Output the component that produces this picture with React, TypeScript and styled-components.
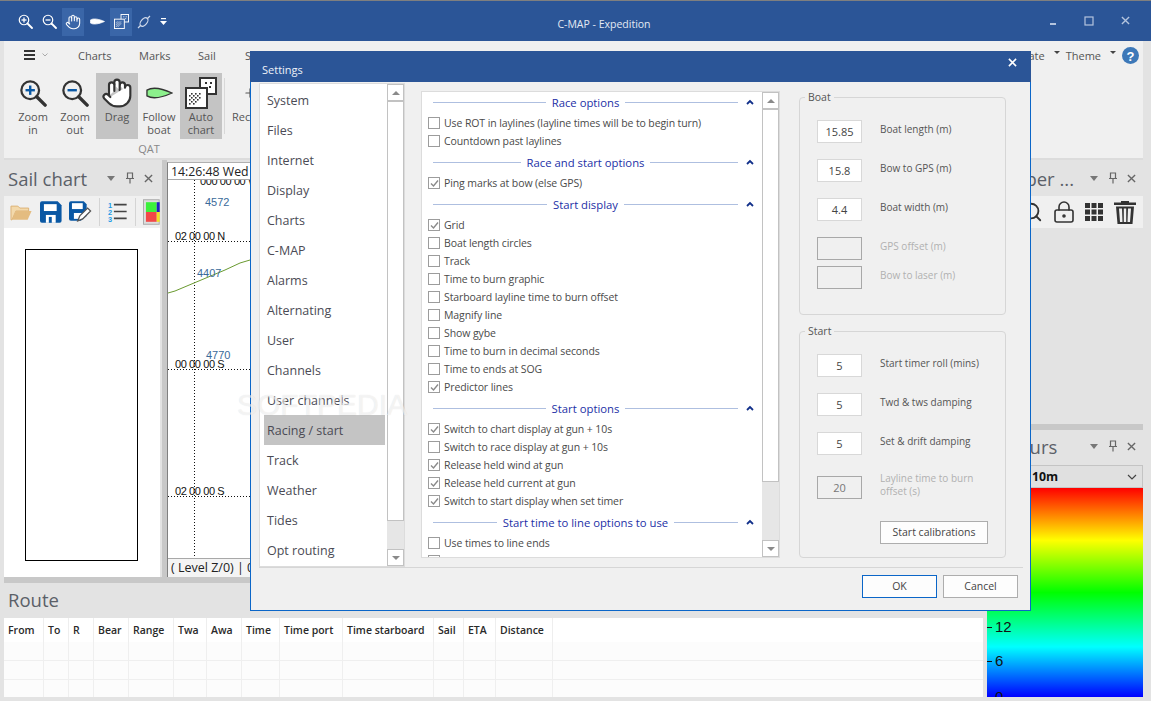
import React from "react";
import styled, { createGlobalStyle } from "styled-components";
import { Hand, Search, LockKeyhole, Plus } from "lucide-react";

const UI = `"Open Sans", "Noto Sans", "Liberation Sans", sans-serif`;

const Global = createGlobalStyle`
  html, body { margin: 0; padding: 0; overflow: hidden; background: #e3e3e3; }
  * { box-sizing: border-box; }
  body { font-family: ${UI}; font-size: 11px; color: #444; }
`;

const Shell = styled.div`
  position: relative;
  width: 1151px;
  height: 701px;
  overflow: hidden;
  display: flex;
  flex-direction: column;
  background: #e3e3e3;
`;

/* ---- title bar ---- */
const TitleBar = styled.header`
  height: 41px;
  flex: none;
  background: #2b5597;
  border-top: 1px solid #7f7f7f;
  display: flex;
  align-items: center;
  padding: 0 8px 0 13px;
  position: relative;
`;
const Qat = styled.div`
  display: flex;
  align-items: center;
  width: 171px;
  margin-top: 1px;
`;
const QatBtn = styled.div<{ $on?: boolean; $w?: number }>`
  width: ${(p) => p.$w ?? 24}px;
  height: 28px;
  display: flex;
  align-items: center;
  justify-content: center;
  background: ${(p) => (p.$on ? "#3a66a8" : "transparent")};
`;
const AppTitle = styled.div`
  flex: 1;
  text-align: center;
  color: #e4eaf4;
  font-size: 10.5px;
  margin-left: -11px;
  padding-top: 6px;
`;
const WinBtns = styled.div`
  display: flex;
  width: 108px;
`;
const WinBtn = styled.div`
  width: 36px;
  height: 40px;
  display: flex;
  align-items: center;
  justify-content: center;
  margin-top: -1px;
`;

/* ---- ribbon ---- */
const Ribbon = styled.section`
  height: 119px;
  flex: none;
  margin: 0 8px 0 4px;
  background: #f0f0f0;
  border-bottom: 2px solid #dcdcdc;
  display: flex;
  flex-direction: column;
`;
const TabRow = styled.nav`
  height: 32px;
  flex: none;
  display: flex;
  align-items: center;
  padding: 0 4px 4px 20px;
`;
const Burger = styled.div`
  display: flex;
  align-items: center;
  gap: 7px;
  width: 54px;
`;
const TabLabel = styled.span<{ $w?: number }>`
  ${(p) => (p.$w ? `width: ${p.$w}px;` : "")}
  font-size: 11px;
  color: #555;
`;
const Spacer = styled.div`
  flex: 1;
`;
const TabCaret = styled.span`
  width: 0;
  height: 0;
  border-left: 3px solid transparent;
  border-right: 3px solid transparent;
  border-top: 3px solid #444;
  margin: 0 6px 6px 9px;
`;
const RibbonBody = styled.div`
  display: flex;
  align-items: flex-start;
  height: 67px;
  padding-left: 8px;
`;
const RibbonBtn = styled.div<{ $on?: boolean }>`
  width: 42px;
  height: 66px;
  display: flex;
  flex-direction: column;
  align-items: center;
  padding-top: 3px;
  background: ${(p) => (p.$on ? "#c4c4c4" : "transparent")};
`;
const RibbonIcon = styled.div`
  height: 34px;
  display: flex;
  align-items: center;
  justify-content: center;
`;
const RibbonText = styled.div`
  font-size: 11px;
  line-height: 13px;
  color: #555;
  text-align: center;
`;
const RibbonDivider = styled.div`
  width: 1px;
  height: 56px;
  margin: 5px 4px 0 2px;
  background: #d8d8d8;
`;
const RibbonCaption = styled.div`
  width: 290px;
  text-align: center;
  font-size: 11px;
  color: #888;
  padding-top: 1px;
`;

/* ---- workspace ---- */
const Workspace = styled.main`
  flex: 1;
  min-height: 0;
  display: flex;
  padding: 0 8px 4px 4px;
`;
const LeftColumn = styled.div`
  width: 979px;
  flex: none;
  display: flex;
  flex-direction: column;
`;
const UpperRow = styled.div`
  height: 417px;
  flex: none;
  display: flex;
`;
const HSplit = styled.div`
  height: 6px;
  flex: none;
  background: #c8c8c8;
`;
const SailPanel = styled.section`
  width: 156px;
  flex: none;
  display: flex;
  flex-direction: column;
`;
const VSplit = styled.div`
  width: 7px;
  flex: none;
  background: #c8c8c8;
  border-left: 2px solid #e3e3e3;
`;
const PanelHead = styled.div<{ $h?: number; $pb?: number }>`
  height: ${(p) => p.$h ?? 36}px;
  flex: none;
  display: flex;
  align-items: center;
  padding: 0 2px ${(p) => p.$pb ?? 0}px 4px;
  font-size: 18.5px;
  color: #5b6068;
  background: #e3e3e3;
`;
const PanelTitle = styled.span<{ $shift?: number }>`
  flex: 1;
  white-space: nowrap;
  overflow: hidden;
  margin-left: ${(p) => p.$shift ?? 0}px;
`;
const PanelCaret = styled.span`
  width: 0;
  height: 0;
  border-left: 4px solid transparent;
  border-right: 4px solid transparent;
  border-top: 5px solid #777;
  margin-right: 5px;
`;
const PanelBtn = styled.span`
  width: 19px;
  height: 16px;
  display: flex;
  align-items: center;
  justify-content: center;
`;
const IconBar = styled.div`
  height: 32px;
  flex: none;
  background: #f0f0f0;
  display: flex;
  align-items: center;
  padding-left: 6px;
  gap: 7.5px;
  overflow: hidden;
`;
const ToolBarRight = styled(IconBar)`
  justify-content: flex-end;
  padding: 0 5px 0 0;
  gap: 9px;
`;
const BarDivider = styled.span`
  width: 1px;
  height: 28px;
  background: #d4d4d4;
  flex: none;
`;
const SailBody = styled.div`
  flex: 1;
  background: #fff;
  padding: 21px 22px 16px 21px;
`;
const SailRect = styled.div`
  height: 100%;
  border: 1px solid #000;
`;
const ChartPanel = styled.section`
  flex: 1;
  min-width: 0;
  margin-top: 2px;
  border-left: 1px solid #808080;
  border-top: 1px solid #b0b0b0;
  background: #fff;
  display: flex;
  flex-direction: column;
`;
const ChartTime = styled.div`
  height: 17px;
  flex: none;
  border-bottom: 1px solid #a8a8a8;
  font: 12.3px/17px ${UI};
  color: #222;
  padding-left: 3px;
`;
const ChartCanvas = styled.svg`
  flex: 1;
  min-height: 0;
  display: block;
  width: 100%;
`;
const ChartStatus = styled.div`
  height: 19px;
  flex: none;
  border-top: 1px solid #a8a8a8;
  font: 12.5px/17px ${UI};
  color: #222;
  padding-left: 3px;
  background: #f4f4f4;
`;

/* ---- route ---- */
const RoutePanel = styled.section`
  flex: 1;
  min-height: 0;
  display: flex;
  flex-direction: column;
`;
const RouteHead = styled.div`
  height: 35px;
  flex: none;
  font-size: 18.5px;
  line-height: 34px;
  color: #5b6068;
  padding-left: 4px;
`;
const RouteGrid = styled.div`
  flex: 1;
  min-height: 0;
  overflow: hidden;
  background: #fff;
`;
const COLS = "40px 25px 25px 35px 45px 33px 35px 38px 63px 91px 30px 32px 57px 1fr";
const RouteHeader = styled.div`
  display: grid;
  grid-template-columns: ${COLS};
  height: 24px;
`;
const RouteTh = styled.div`
  font-size: 10.5px;
  font-weight: 600;
  line-height: 24px;
  color: #2a2a2a;
  padding-left: 4px;
  border-right: 1px solid #eee;
  white-space: nowrap;
  &:last-child { border-right: 0; }
`;
const RouteRow = styled.div`
  display: grid;
  grid-template-columns: ${COLS};
  height: 19px;
  background: #fcfcfc;
  border-bottom: 1px solid #efefef;
`;
const RouteTd = styled.div`
  border-right: 1px solid #efefef;
  &:last-child { border-right: 0; }
`;

/* ---- right column ---- */
const RightColumn = styled.aside`
  flex: 1;
  min-width: 0;
  margin-left: 4px;
  display: flex;
  flex-direction: column;
`;
const NumberPanel = styled.section`
  height: 270px;
  flex: none;
  display: flex;
  flex-direction: column;
`;
const ColoursPanel = styled.section`
  flex: 1;
  min-height: 0;
  display: flex;
  flex-direction: column;
`;
const ColourSelect = styled.div`
  height: 23px;
  flex: none;
  background: #e0e0e0;
  border: 1px solid #c4c4c4;
  display: flex;
  align-items: center;
  justify-content: space-between;
  padding: 0 5px 0 17px;
  font-size: 12.3px;
  font-weight: 700;
  color: #111;
`;
const Scale = styled.div`
  flex: 1;
  position: relative;
  overflow: hidden;
  background: linear-gradient(
    to bottom,
    #ff0000 0%,
    #ffff00 25%,
    #00ff00 50%,
    #00ffff 76%,
    #0000ff 100%
  );
`;
const ScaleMark = styled.div<{ $top: number }>`
  position: absolute;
  left: 0;
  top: ${(p) => p.$top}px;
  display: flex;
  align-items: center;
  gap: 3px;
  font: 15px/16px "Liberation Sans", sans-serif;
  color: #111;
  &::before {
    content: "";
    width: 5px;
    height: 1px;
    background: #111;
  }
`;

/* ---- dialog ---- */
const Dialog = styled.div`
  position: absolute;
  left: 250px;
  top: 51px;
  width: 781px;
  height: 560px;
  background: #f0f0f0;
  border: 1px solid #0b66c8;
  border-top: 0;
  display: flex;
  flex-direction: column;
`;
const DialogHead = styled.div`
  height: 31px;
  flex: none;
  margin: 0 -1px;
  background: #2b5597;
  color: #eef2f8;
  display: flex;
  align-items: center;
  justify-content: space-between;
  font-size: 11px;
  padding: 6px 14px 0 12px;
`;
const DialogClose = styled.span`
  display: flex;
  margin-top: -15px;
`;
const DialogBody = styled.div`
  height: 485px;
  flex: none;
  display: flex;
  align-items: flex-start;
  padding: 1px 0 0 8px;
`;
const ListFrame = styled.div`
  width: 146px;
  height: 485px;
  flex: none;
  display: flex;
  background: #fff;
  border: 1px solid #dcdcdc;
  border-bottom-width: 2px;
`;
const ListItems = styled.ul`
  flex: 1;
  list-style: none;
  margin: 0;
  padding: 1px 0 0 4px;
  overflow: hidden;
`;
const ListItem = styled.li<{ $on?: boolean }>`
  height: 30px;
  width: 121px;
  line-height: 31px;
  padding-left: 3px;
  font-size: 12.5px;
  color: #4b4b55;
  background: ${(p) => (p.$on ? "#c4c4c4" : "transparent")};
`;
const ScrollBar = styled.div`
  width: 17px;
  flex: none;
  display: flex;
  flex-direction: column;
  background: #e6e6e6;
`;
const ScrollArrow = styled.div<{ $down?: boolean }>`
  height: 17px;
  flex: none;
  margin-top: ${(p) => (p.$down ? "auto" : "0")};
  background: #fff;
  border: 1px solid #c2c2c2;
  display: flex;
  align-items: center;
  justify-content: center;
  &::after {
    content: "";
    border-left: 4px solid transparent;
    border-right: 4px solid transparent;
    ${(p) => (p.$down ? "border-top: 4px solid #8a8a8a;" : "border-bottom: 4px solid #8a8a8a;")}
  }
`;
const ScrollThumb = styled.div<{ $h: number }>`
  height: ${(p) => p.$h}px;
  flex: none;
  background: #fff;
  border: 1px solid #c2c2c2;
`;
const OptionsFrame = styled.div`
  width: 359px;
  height: 467px;
  flex: none;
  margin: 8px 0 0 16px;
  display: flex;
  background: #fff;
  border: 1px solid #dcdcdc;
`;
const OptionsList = styled.div`
  flex: 1;
  min-width: 0;
  overflow: hidden;
  padding: 0 0 0 6px;
`;
const SectionHead = styled.div<{ $first?: boolean }>`
  height: 20px;
  margin: ${(p) => (p.$first ? "0" : "2px")} 0 2px;
  display: flex;
  align-items: center;
  padding-left: 5px;
  color: #1c2fa6;
  font-size: 11.3px;
  white-space: nowrap;
`;
const SectionRule = styled.span`
  flex: 1;
  height: 1px;
  background: #aebfe0;
`;
const SectionText = styled.span`
  padding: 0 6px;
`;
const SectionChevron = styled.span`
  width: 24px;
  flex: none;
  display: flex;
  justify-content: center;
`;
const CheckRow = styled.div`
  height: 18px;
  display: flex;
  align-items: center;
  gap: 4px;
  font-size: 10.5px;
  letter-spacing: -0.1px;
  color: #4a4a4a;
  white-space: nowrap;
`;
const CheckBox = styled.span`
  width: 12px;
  height: 12px;
  flex: none;
  background: #fff;
  border: 1px solid #9c9c9c;
  display: flex;
  align-items: center;
  justify-content: center;
`;
const GroupColumn = styled.div`
  width: 207px;
  flex: none;
  margin: 6px 0 0 19px;
  display: flex;
  flex-direction: column;
  gap: 8px;
`;
const Group = styled.fieldset<{ $h: number }>`
  height: ${(p) => p.$h}px;
  margin: 0;
  min-width: 0;
  padding: 0;
  border: 1px solid #d6d6d6;
  border-radius: 4px;
`;
const GroupLegend = styled.legend`
  margin-left: 5px;
  padding: 0 3px;
  font-size: 10.5px;
  line-height: 16px;
  color: #555;
`;
const GroupBody = styled.div`
  padding: 15px 0 0 17px;
`;
const FieldRow = styled.div<{ $gap: number }>`
  display: flex;
  align-items: center;
  gap: 18px;
  margin-bottom: ${(p) => p.$gap}px;
`;
const NumInput = styled.div<{ $off?: boolean }>`
  width: 45px;
  height: 23px;
  flex: none;
  border: 1px solid ${(p) => (p.$off ? "#a8a8a8" : "#d8d8d8")};
  background: ${(p) => (p.$off ? "#f0f0f0" : "#fff")};
  color: ${(p) => (p.$off ? "#777" : "#444")};
  font-size: 11px;
  line-height: 21px;
  text-align: center;
`;
const FieldLabel = styled.div<{ $off?: boolean }>`
  font-size: 10px;
  line-height: 13px;
  margin-bottom: 4px;
  color: ${(p) => (p.$off ? "#b0b0b0" : "#555")};
`;
const PushBtn = styled.div<{ $w: number; $primary?: boolean }>`
  width: ${(p) => p.$w}px;
  height: 23px;
  background: #fdfdfd;
  border: 1px solid ${(p) => (p.$primary ? "#0b66c8" : "#adadad")};
  font-size: 10.5px;
  line-height: 21px;
  text-align: center;
  color: #444;
`;
const CalibRow = styled.div`
  padding-left: 63px;
`;
const DialogFoot = styled.div`
  flex: 1;
  margin: 0 7px 0 8px;
  border-top: 1px solid #d6d6d6;
  display: flex;
  justify-content: flex-end;
  gap: 6px;
  padding: 7px 5px 0 0;
`;
const Watermark = styled.div`
  position: absolute;
  left: 237px;
  top: 388px;
  font: 400 30px/34px "Liberation Sans", sans-serif;
  color: rgba(255, 255, 255, 0.6);
  text-shadow: 0 0 1px rgba(0, 0, 0, 0.12);
  pointer-events: none;
`;

/* ---- drawings ---- */
const Mag = ({ size, color, sign, signColor }: { size: number; color: string; sign: "+" | "-"; signColor: string }) => (
  <svg width={size} height={size} viewBox="0 0 30 30" fill="none">
    <circle cx="12" cy="12" r="9.5" stroke={color} strokeWidth="2.4" />
    <path d="M19 19 L28 28" stroke={color} strokeWidth="3.6" strokeLinecap="round" />
    <path d="M7 12 H17" stroke={signColor} strokeWidth="2.6" />
    {sign === "+" && <path d="M12 7 V17" stroke={signColor} strokeWidth="2.6" />}
  </svg>
);
const BoatShape = ({ w, h, fill, stroke }: { w: number; h: number; fill: string; stroke: string }) => (
  <svg width={w} height={h} viewBox="0 0 28 12">
    <path d="M1 3 C6 0 16 1 27 6 C16 11 6 12 1 9 Z" fill={fill} stroke={stroke} strokeWidth="1.4" />
  </svg>
);
const CHECKS: [number, number][] = [
  [4, 26], [6, 24], [8, 22], [10, 20], [12, 18], [14, 16],
  [4, 22], [6, 20], [8, 18], [10, 16], [4, 18], [6, 16],
  [8, 26], [10, 24], [12, 22], [14, 20],
];
const AutoChartIcon = ({ size, color, bg }: { size: number; color: string; bg: string }) => (
  <svg width={size} height={size} viewBox="0 0 32 32">
    <rect x="15" y="1" width="16" height="16" fill={bg} stroke={color} strokeWidth="2" />
    <rect x="1" y="11" width="21" height="20" fill={bg} stroke={color} strokeWidth="2" />
    <g fill={color}>
      {CHECKS.map(([x, y]) => <rect key={`${x}-${y}`} x={x} y={y} width="1.6" height="1.6" />)}
      <rect x="20" y="5" width="2" height="2" /><rect x="25" y="5" width="2" height="2" />
      <rect x="24" y="9" width="2" height="2" />
    </g>
  </svg>
);
const PinIcon = () => (
  <svg width="10" height="12" viewBox="0 0 10 12" fill="none" stroke="#666" strokeWidth="1.2">
    <path d="M2.5 1 H7.5 V6.5 H2.5 Z M1 6.5 H9 M5 7 V11.5" />
  </svg>
);
const CloseIcon = ({ color = "#666", size = 9, sw = 1.5 }: { color?: string; size?: number; sw?: number }) => (
  <svg width={size} height={size} viewBox="0 0 10 10" stroke={color} strokeWidth={sw}>
    <path d="M1 1 L9 9 M9 1 L1 9" />
  </svg>
);
const Tick = () => (
  <svg width="9" height="9" viewBox="0 0 9 9" fill="none" stroke="#8a8a8a" strokeWidth="1.4">
    <path d="M1 4.5 L3.5 7 L8 1.5" />
  </svg>
);
const Chevron = () => (
  <svg width="8" height="6" viewBox="0 0 8 6" fill="none" stroke="#12308a" strokeWidth="1.8">
    <path d="M1 5 L4 2 L7 5" />
  </svg>
);
const FolderIcon = () => (
  <svg width="23" height="20" viewBox="0 0 23 20">
    <path d="M1 4 H8 L10 6 H19 V9 H6 L2 18 H1 Z" fill="#f3d9ab" stroke="#dcb377" />
    <path d="M6 9 H22 L18 18 H2 Z" fill="#e4bc80" />
  </svg>
);
const SaveIcon = () => (
  <svg width="22" height="22" viewBox="0 0 22 22">
    <path d="M2 0 H18 L22 4 V20 A2 2 0 0 1 20 22 H2 A2 2 0 0 1 0 20 V2 A2 2 0 0 1 2 0 Z" fill="#0a58a4" />
    <rect x="4" y="3" width="13" height="7" fill="#fff" />
    <rect x="6" y="14" width="10" height="8" fill="#fff" />
    <rect x="9" y="16" width="3" height="6" fill="#0a58a4" />
  </svg>
);
const SaveEditIcon = () => (
  <svg width="23" height="22" viewBox="0 0 23 22">
    <path d="M2 0 H15 L18 3 V15 L12 20 H2 A2 2 0 0 1 0 18 V2 A2 2 0 0 1 2 0 Z" fill="#0a58a4" />
    <rect x="3" y="2" width="11" height="6" fill="#fff" />
    <rect x="5" y="12" width="8" height="6" fill="#fff" />
    <path d="M9 20 L11 15 L19 7 L22 10 L14 18 Z" fill="#fff" stroke="#555" strokeWidth="1.3" />
  </svg>
);
const NumListIcon = () => (
  <svg width="20" height="22" viewBox="0 0 20 22">
    <g fill="#1d9be6" fontFamily="Liberation Sans, sans-serif" fontWeight="700" fontSize="7.5">
      <text x="0" y="7">1</text><text x="0" y="14">2</text><text x="0" y="21">3</text>
    </g>
    <path d="M6 3.5 H19 M6 10.5 H19 M6 17.5 H19" stroke="#444" strokeWidth="1.6" />
  </svg>
);
const ColourTile = () => (
  <svg width="17" height="26" viewBox="0 0 17 26">
    <rect x="0.5" y="0.5" width="16" height="25" fill="#ddd" stroke="#aaa" />
    <rect x="3" y="3" width="11" height="10" fill="#3cf03c" />
    <rect x="3" y="13" width="11" height="10" fill="#f24848" />
    <rect x="14" y="3" width="3" height="10" fill="#2020c0" />
    <rect x="14" y="13" width="3" height="10" fill="#f0e020" />
  </svg>
);
const GridIcon = () => (
  <svg width="18" height="18" viewBox="0 0 18 18" fill="#333">
    {[0, 6.5, 13].map((y) =>
      [0, 6.5, 13].map((x) => <rect key={`${x}-${y}`} x={x} y={y} width="5" height="5" />)
    )}
  </svg>
);
const BinIcon = () => (
  <svg width="26" height="24" viewBox="0 0 26 24" fill="#333">
    <path d="M2 2.5 H9 V1 H17 V2.5 H24 V5 H2 Z" />
    <path d="M4 6.5 H22 L20.5 24 H5.5 Z M7 8.5 L8 22 H10.5 L10 8.5 Z M11.8 8.5 V22 H14.2 V8.5 Z M16 8.5 L15.5 22 H18 L19 8.5 Z" fillRule="evenodd" />
  </svg>
);

/* ---- data ---- */
const NAV = ["System", "Files", "Internet", "Display", "Charts", "C-MAP", "Alarms", "Alternating", "User", "Channels", "User channels", "Racing / start", "Track", "Weather", "Tides", "Opt routing"];

type Sec = { title: string; items: [string, boolean][] };
const SECTIONS: Sec[] = [
  { title: "Race options", items: [["Use ROT in laylines (layline times will be to begin turn)", false], ["Countdown past laylines", false]] },
  { title: "Race and start options", items: [["Ping marks at bow (else GPS)", true]] },
  {
    title: "Start display",
    items: [["Grid", true], ["Boat length circles", false], ["Track", false], ["Time to burn graphic", false], ["Starboard layline time to burn offset", false], ["Magnify line", false], ["Show gybe", false], ["Time to burn in decimal seconds", false], ["Time to ends at SOG", false], ["Predictor lines", true]],
  },
  {
    title: "Start options",
    items: [["Switch to chart display at gun + 10s", true], ["Switch to race display at gun + 10s", false], ["Release held wind at gun", true], ["Release held current at gun", true], ["Switch to start display when set timer", true]],
  },
  { title: "Start time to line options to use", items: [["Use times to line ends", false], ["Use average speed", false]] },
];

const ROUTE_COLS = ["From", "To", "R", "Bear", "Range", "Twa", "Awa", "Time", "Time port", "Time starboard", "Sail", "ETA", "Distance", ""];

const PanelTools = () => (
  <>
    <PanelCaret />
    <PanelBtn><PinIcon /></PanelBtn>
    <PanelBtn><CloseIcon /></PanelBtn>
  </>
);

export default function App() {
  return (
    <Shell>
      <Global />
      <TitleBar>
        <Qat>
          <QatBtn><Mag size={15} color="#fff" sign="+" signColor="#fff" /></QatBtn>
          <QatBtn $w={25}><Mag size={15} color="#fff" sign="-" signColor="#fff" /></QatBtn>
          <QatBtn $on $w={22}><Hand size={16} color="#fff" strokeWidth={1.6} /></QatBtn>
          <QatBtn $w={26}><BoatShape w={15} h={7} fill="#fff" stroke="#fff" /></QatBtn>
          <QatBtn $on $w={22}><AutoChartIcon size={15} color="#fff" bg="#3a66a8" /></QatBtn>
          <QatBtn>
            <svg width="14" height="14" viewBox="0 0 14 14" fill="none" stroke="#cfd9ea" strokeWidth="1.2">
              <ellipse cx="7" cy="7" rx="3" ry="5" transform="rotate(40 7 7)" />
              <path d="M1 13 L4 10 M10 4 L13 1" />
            </svg>
          </QatBtn>
          <QatBtn $w={14}>
            <svg width="7" height="8" viewBox="0 0 7 8" fill="#fff">
              <rect x="1" y="0" width="5" height="1.2" />
              <path d="M0 3 H7 L3.5 7 Z" />
            </svg>
          </QatBtn>
        </Qat>
        <AppTitle>C-MAP - Expedition</AppTitle>
        <WinBtns>
          <WinBtn><svg width="10" height="10" viewBox="0 0 10 10" fill="#b4c4de"><rect x="2" y="7" width="6" height="2" /></svg></WinBtn>
          <WinBtn><svg width="10" height="10" viewBox="0 0 10 10" fill="none" stroke="#b4c4de" strokeWidth="1.2"><rect x="1" y="1" width="8" height="8" /></svg></WinBtn>
          <WinBtn><CloseIcon color="#b4c4de" size={9} /></WinBtn>
        </WinBtns>
      </TitleBar>

      <Ribbon>
        <TabRow>
          <Burger>
            <svg width="11" height="10" viewBox="0 0 11 10" fill="#333"><rect y="0" width="11" height="2" /><rect y="4" width="11" height="2" /><rect y="8" width="11" height="2" /></svg>
            <svg width="6" height="4" viewBox="0 0 6 4" fill="none" stroke="#aaa"><path d="M0.5 0.5 L3 3 L5.5 0.5" /></svg>
          </Burger>
          <TabLabel $w={61}>Charts</TabLabel>
          <TabLabel $w={59}>Marks</TabLabel>
          <TabLabel $w={47}>Sail</TabLabel>
          <TabLabel $w={40}>Start</TabLabel>
          <Spacer />
          <TabLabel>Navigate</TabLabel>
          <TabCaret />
          <TabLabel>Theme</TabLabel>
          <TabCaret />
          <svg width="17" height="17" viewBox="0 0 17 17">
            <circle cx="8.5" cy="8.5" r="8.5" fill="#3d78b8" />
            <text x="8.5" y="13.5" textAnchor="middle" fill="#fff" fontSize="13" fontWeight="700" fontFamily="Liberation Sans, sans-serif">?</text>
          </svg>
        </TabRow>
        <RibbonBody>
          <RibbonBtn><RibbonIcon><Mag size={28} color="#333" sign="+" signColor="#0a58a4" /></RibbonIcon><RibbonText>Zoom<br />in</RibbonText></RibbonBtn>
          <RibbonBtn><RibbonIcon><Mag size={28} color="#333" sign="-" signColor="#0a58a4" /></RibbonIcon><RibbonText>Zoom<br />out</RibbonText></RibbonBtn>
          <RibbonBtn $on><RibbonIcon><Hand size={32} color="#333" fill="#fff" strokeWidth={1.6} /></RibbonIcon><RibbonText>Drag</RibbonText></RibbonBtn>
          <RibbonBtn><RibbonIcon><BoatShape w={27} h={12} fill="#8cf08c" stroke="#333" /></RibbonIcon><RibbonText>Follow<br />boat</RibbonText></RibbonBtn>
          <RibbonBtn $on><RibbonIcon><AutoChartIcon size={32} color="#333" bg="#fff" /></RibbonIcon><RibbonText>Auto<br />chart</RibbonText></RibbonBtn>
          <RibbonDivider />
          <RibbonBtn><RibbonIcon><Plus size={14} color="#555" /></RibbonIcon><RibbonText>Record</RibbonText></RibbonBtn>
        </RibbonBody>
        <RibbonCaption>QAT</RibbonCaption>
      </Ribbon>

      <Workspace>
        <LeftColumn>
          <UpperRow>
            <SailPanel>
              <PanelHead><PanelTitle>Sail chart</PanelTitle><PanelTools /></PanelHead>
              <IconBar>
                <FolderIcon /><SaveIcon /><SaveEditIcon /><BarDivider /><NumListIcon /><BarDivider /><ColourTile />
              </IconBar>
              <SailBody><SailRect /></SailBody>
            </SailPanel>
            <VSplit />
            <ChartPanel>
              <ChartTime>14:26:48 Wed</ChartTime>
              <ChartCanvas>
                <g fontFamily="Liberation Sans, sans-serif" fontSize="11" fill="#111">
                  <text x="32" y="5" letterSpacing="-0.4">000 00 00 W</text>
                  <text x="7" y="60" letterSpacing="-0.4">02 00 00 N</text>
                  <text x="7" y="188" letterSpacing="-0.4">00 00 00 S</text>
                  <text x="7" y="315" letterSpacing="-0.4">02 00 00 S</text>
                </g>
                <g stroke="#111" strokeDasharray="1 2">
                  <path d="M0 61.5 H820 M0 189.5 H820 M0 316.5 H820" />
                  <path d="M26.5 0 V380" />
                </g>
                <path d="M0 113 L7 111 L26 103 L57 90 L72 83 L82 80 L820 60" fill="none" stroke="#6a9a30" strokeWidth="1" />
                <g fontFamily="Liberation Sans, sans-serif" fontSize="11" fill="#3a6a9a">
                  <text x="37" y="26">4572</text>
                  <text x="29" y="97">4407</text>
                  <text x="38" y="179">4770</text>
                </g>
              </ChartCanvas>
              <ChartStatus>( Level Z/0) | 0</ChartStatus>
            </ChartPanel>
          </UpperRow>
          <HSplit />
          <RoutePanel>
            <RouteHead>Route</RouteHead>
            <RouteGrid>
              <RouteHeader>
                {ROUTE_COLS.map((c, i) => <RouteTh key={i}>{c}</RouteTh>)}
              </RouteHeader>
              {[0, 1, 2].map((r) => (
                <RouteRow key={r}>
                  {ROUTE_COLS.map((_, i) => <RouteTd key={i} />)}
                </RouteRow>
              ))}
            </RouteGrid>
          </RoutePanel>
        </LeftColumn>
        <RightColumn>
          <NumberPanel>
            <PanelHead><PanelTitle $shift={-8}>Number ...</PanelTitle><PanelTools /></PanelHead>
            <ToolBarRight>
              <Search size={22} color="#333" strokeWidth={2} />
              <LockKeyhole size={24} color="#333" strokeWidth={1.6} />
              <GridIcon />
              <BinIcon />
            </ToolBarRight>
            <Spacer />
            <HSplit />
          </NumberPanel>
          <ColoursPanel>
            <PanelHead $h={35} $pb={3}><PanelTitle>Colours</PanelTitle><PanelTools /></PanelHead>
            <ColourSelect>
              <span>Tws 10m</span>
              <svg width="10" height="6" viewBox="0 0 10 6" fill="none" stroke="#444" strokeWidth="1.2"><path d="M1 1 L5 5 L9 1" /></svg>
            </ColourSelect>
            <Scale>
              <ScaleMark $top={131}>12</ScaleMark>
              <ScaleMark $top={165}>6</ScaleMark>
              <ScaleMark $top={201}>0</ScaleMark>
            </Scale>
          </ColoursPanel>
        </RightColumn>
      </Workspace>

      <Dialog>
        <DialogHead>
          Settings
          <DialogClose><CloseIcon color="#fff" size={9} sw={1.7} /></DialogClose>
        </DialogHead>
        <DialogBody>
          <ListFrame>
            <ListItems>
              {NAV.map((n) => <ListItem key={n} $on={n === "Racing / start"}>{n}</ListItem>)}
            </ListItems>
            <ScrollBar>
              <ScrollArrow />
              <ScrollThumb $h={420} />
              <ScrollArrow $down />
            </ScrollBar>
          </ListFrame>
          <OptionsFrame>
            <OptionsList>
              {SECTIONS.map((s, i) => (
                <React.Fragment key={s.title}>
                  <SectionHead $first={i === 0}>
                    <SectionRule />
                    <SectionText>{s.title}</SectionText>
                    <SectionRule />
                    <SectionChevron><Chevron /></SectionChevron>
                  </SectionHead>
                  {s.items.map(([label, on]) => (
                    <CheckRow key={label}>
                      <CheckBox>{on && <Tick />}</CheckBox>
                      {label}
                    </CheckRow>
                  ))}
                </React.Fragment>
              ))}
            </OptionsList>
            <ScrollBar>
              <ScrollArrow />
              <ScrollThumb $h={373} />
              <ScrollArrow $down />
            </ScrollBar>
          </OptionsFrame>
          <GroupColumn>
            <Group $h={226}>
              <GroupLegend>Boat</GroupLegend>
              <GroupBody>
                <FieldRow $gap={16}><NumInput>15.85</NumInput><FieldLabel>Boat length (m)</FieldLabel></FieldRow>
                <FieldRow $gap={16}><NumInput>15.8</NumInput><FieldLabel>Bow to GPS (m)</FieldLabel></FieldRow>
                <FieldRow $gap={16}><NumInput>4.4</NumInput><FieldLabel>Boat width (m)</FieldLabel></FieldRow>
                <FieldRow $gap={6}><NumInput $off /><FieldLabel $off>GPS offset (m)</FieldLabel></FieldRow>
                <FieldRow $gap={0}><NumInput $off /><FieldLabel $off>Bow to laser (m)</FieldLabel></FieldRow>
              </GroupBody>
            </Group>
            <Group $h={235}>
              <GroupLegend>Start</GroupLegend>
              <GroupBody>
                <FieldRow $gap={16}><NumInput>5</NumInput><FieldLabel>Start timer roll (mins)</FieldLabel></FieldRow>
                <FieldRow $gap={16}><NumInput>5</NumInput><FieldLabel>Twd &amp; tws damping</FieldLabel></FieldRow>
                <FieldRow $gap={17}><NumInput>5</NumInput><FieldLabel>Set &amp; drift damping</FieldLabel></FieldRow>
                <FieldRow $gap={19}><NumInput $off>20</NumInput><FieldLabel $off>Layline time to burn<br />offset (s)</FieldLabel></FieldRow>
                <CalibRow><PushBtn $w={108}>Start calibrations</PushBtn></CalibRow>
              </GroupBody>
            </Group>
          </GroupColumn>
        </DialogBody>
        <DialogFoot>
          <PushBtn $w={75} $primary>OK</PushBtn>
          <PushBtn $w={75}>Cancel</PushBtn>
        </DialogFoot>
      </Dialog>
      <Watermark>SOFTPEDIA</Watermark>
    </Shell>
  );
}
